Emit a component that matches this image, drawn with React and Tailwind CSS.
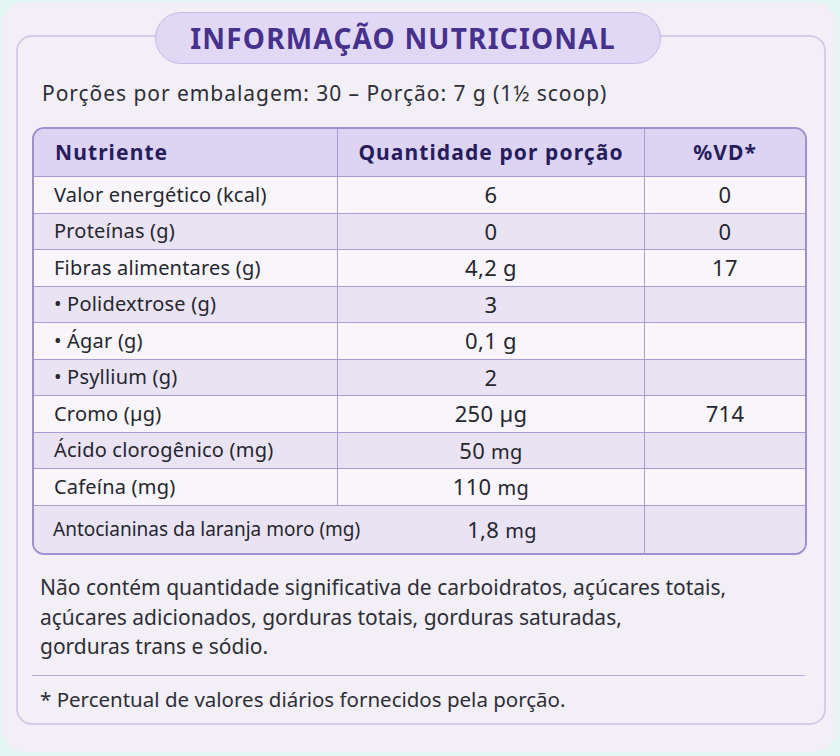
import React from "react";

const rows = [
  { n: "Valor energético (kcal)", q: "6", v: "0" },
  { n: "Proteínas (g)", q: "0", v: "0" },
  { n: "Fibras alimentares (g)", q: "4,2 g", v: "17" },
  { n: "• Polidextrose (g)", q: "3", v: "" },
  { n: "• Ágar (g)", q: "0,1 g", v: "" },
  { n: "• Psyllium (g)", q: "2", v: "" },
  { n: "Cromo (µg)", q: "250 µg", v: "714" },
  { n: "Ácido clorogênico (mg)", q: ["50", "mg"], v: "" },
  { n: "Cafeína (mg)", q: ["110", "mg"], v: "" },
];

function Qty({ q }) {
  if (Array.isArray(q)) {
    return (
      <span>
        {q[0]} <span className="text-[20px]">{q[1]}</span>
      </span>
    );
  }
  return <span>{q}</span>;
}

export default function App() {
  return (
    <div
      className="w-[840px] h-[756px] bg-[#e3f6f3] pt-[2px] pl-[2px] pr-[4px] pb-[4px]"
      style={{ fontFamily: '"Noto Sans", "Open Sans", sans-serif' }}
    >
      <div className="h-full rounded-[22px] bg-[#f2eff6] pt-[33px] pl-[14px] pr-[10px] pb-[27px]">
        <div className="h-full rounded-[16px] border-2 border-[#d4cce6] flex flex-col">
          <div className="-mt-[25px] ml-[137px] w-[506px] h-[52px] rounded-full bg-[#e1d8f5] border-[1.5px] border-[#c6bbe6] flex items-center justify-center">
            <span className="text-[28px] font-bold text-[#46318d] tracking-[1.2px] pr-[10px]">
              INFORMAÇÃO NUTRICIONAL
            </span>
          </div>

          <p className="mt-[15px] pl-[24px] text-[21px] tracking-[0.95px] leading-[28px] text-[#2e2e36]">
            Porções por embalagem: 30 – Porção: 7 g (1½ scoop)
          </p>

          <div className="mt-[20px] ml-[14px] mr-[17px] rounded-[12px] border-2 border-[#9d90d0] overflow-hidden text-[20px] text-[#26262e]">
            <div className="grid grid-cols-[304px_307px_1fr] h-[48px] bg-[#ddd3f2] border-b-[1.5px] border-[#a99dd6] font-bold text-[21px] tracking-[1.1px] text-[#261d5c]">
              <div className="flex items-center pl-[21px] border-r-[1.5px] border-[#a99dd6]">
                Nutriente
              </div>
              <div className="flex items-center justify-center border-r-[1.5px] border-[#a99dd6]">
                Quantidade por porção
              </div>
              <div className="flex items-center justify-center">%VD*</div>
            </div>

            {rows.map((r, i) => (
              <div
                key={i}
                className={`grid grid-cols-[304px_307px_1fr] h-[36.5px] border-b-[1.5px] border-[#a99dd6] ${
                  i % 2 === 0 ? "bg-[#f8f6fa]" : "bg-[#e9e3f4]"
                }`}
              >
                <div className="flex items-center pl-[20px] tracking-[0.2px] border-r-[1.5px] border-[#a99dd6]">
                  {r.n}
                </div>
                <div className="flex items-center justify-center text-[22px] tracking-[0.3px] border-r-[1.5px] border-[#a99dd6]">
                  <Qty q={r.q} />
                </div>
                <div className="flex items-center justify-center text-[22px] tracking-[0.3px]">
                  {r.v}
                </div>
              </div>
            ))}

            <div className="grid grid-cols-[304px_307px_1fr] h-[47.5px] bg-[#e9e3f4]">
              <div className="flex items-center pl-[19px] whitespace-nowrap text-[19px] tracking-[0px]">
                Antocianinas da laranja moro (mg)
              </div>
              <div className="flex items-center justify-center pl-[22px] text-[22px] tracking-[0.3px] border-r-[1.5px] border-[#a99dd6]">
                <span>
                  1,8 <span className="text-[20px]">mg</span>
                </span>
              </div>
              <div></div>
            </div>
          </div>

          <p className="mt-[18px] pl-[22px] text-[21px] leading-[29.5px] text-[#2e2e36]">
            Não contém quantidade significativa de carboidratos, açúcares totais,
            <br />
            açúcares adicionados, gorduras totais, gorduras saturadas,
            <br />
            gorduras trans e sódio.
          </p>

          <div className="mt-[13px] ml-[14px] mr-[19px] h-[1.5px] bg-[#b4aad9]"></div>

          <p className="mt-[9px] pl-[22px] text-[20.5px] leading-[29px] text-[#2e2e36]">
            * Percentual de valores diários fornecidos pela porção.
          </p>
        </div>
      </div>
    </div>
  );
}
